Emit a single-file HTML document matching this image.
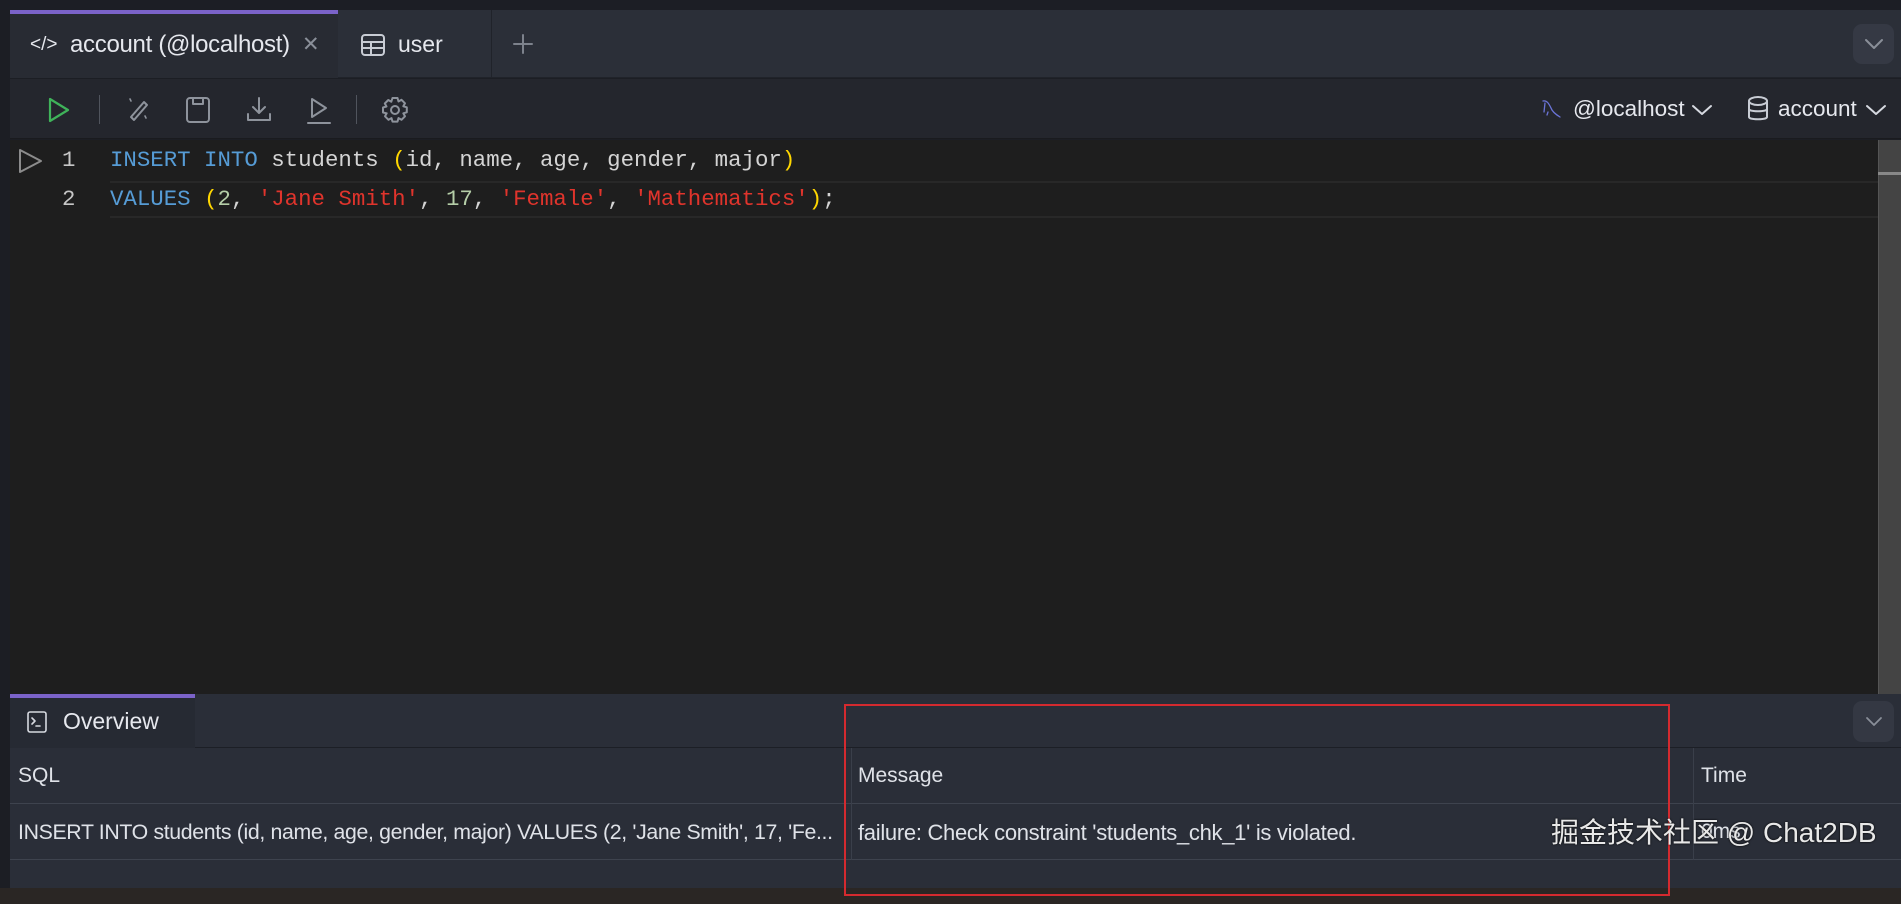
<!DOCTYPE html>
<html><head><meta charset="utf-8"><style>
*{margin:0;padding:0;box-sizing:border-box}
body{width:1901px;height:904px;overflow:hidden;background:#1c1e24;font-family:"Liberation Sans","Noto Sans CJK SC",sans-serif;position:relative;color:#d8dbe2}
.a{position:absolute}
.mono{font-family:"Liberation Mono",monospace;font-size:22.4px;white-space:pre}
svg{position:absolute;fill:none;stroke-linecap:round;stroke-linejoin:round}
</style></head><body>
<!-- tab bar -->
<div class="a" style="left:0;top:0;width:1901px;height:10px;background:#1c1e25"></div>
<div class="a" style="left:10px;top:10px;width:1891px;height:68px;background:#2b2f38;border-bottom:1px solid #20232a"></div>
<div class="a" style="left:10px;top:10px;width:328px;height:68px;background:#282b33"></div>
<div class="a" style="left:10px;top:10px;width:328px;height:4px;background:#7b63c9"></div>
<div class="a" style="left:338px;top:10px;width:154px;height:68px;border-right:1px solid #20232a"></div>
<div class="a" style="left:30px;top:34px;font-size:19px;color:#e6e8ee">&lt;/&gt;</div>
<div class="a" style="left:70px;top:31px;font-size:24px;color:#e6e8ee;letter-spacing:-0.3px">account (@localhost)</div>
<div class="a" style="left:302px;top:32px;font-size:21px;color:#8a8f99">✕</div>
<svg style="left:360px;top:33px" width="26" height="24" stroke="#c8ccd4" stroke-width="2"><rect x="2" y="2" width="22" height="20" rx="3"/><path d="M2 9H24M2 15H24M11 9V22"/></svg>
<div class="a" style="left:398px;top:31px;font-size:23px;color:#e6e8ee">user</div>
<svg style="left:512px;top:33px" width="22" height="22" stroke="#7d828c" stroke-width="2"><path d="M11 2V20M2 11H20"/></svg>
<div class="a" style="left:1853px;top:24px;width:41px;height:40px;border-radius:9px;background:#353944"></div>
<svg style="left:1863px;top:36px" width="22" height="16" stroke="#8a8f99" stroke-width="2"><path d="M3 4L11 12L19 4"/></svg>
<!-- toolbar -->
<div class="a" style="left:10px;top:79px;width:1891px;height:60px;background:#24262d;border-bottom:1px solid #1a1b1f"></div>
<svg style="left:46px;top:96px" width="26" height="28" stroke="#3fb35a" stroke-width="2.2"><path d="M4 3L22 14L4 25Z"/></svg>
<div class="a" style="left:99px;top:95px;width:1px;height:29px;background:#50545d"></div>
<svg style="left:125px;top:95px" width="30" height="30" stroke="#8e939c" stroke-width="2"><path d="M9 25L6 22L19 7L22 10Z"/><path d="M5 4L6 6M20 21L21 23" stroke-width="1.6"/></svg>
<svg style="left:185px;top:96px" width="26" height="28" stroke="#8e939c" stroke-width="2"><rect x="2" y="2" width="22" height="24" rx="3"/><path d="M8 2V8H18V2"/></svg>
<svg style="left:245px;top:95px" width="28" height="30" stroke="#8e939c" stroke-width="2"><path d="M14 3V18M8 12L14 18L20 12M3 19V25H25V19"/></svg>
<svg style="left:304px;top:95px" width="28" height="30" stroke="#8e939c" stroke-width="2"><path d="M8 4L22 13L8 22Z M4 28H26"/></svg>
<div class="a" style="left:356px;top:95px;width:1px;height:29px;background:#50545d"></div>
<svg style="left:380px;top:95px" width="30" height="30" stroke="#8e939c" stroke-width="2"><path d="M12.5 3h5l1 3.5 3-1.7 3.5 3.5-1.7 3 3.5 1v5l-3.5 1 1.7 3-3.5 3.5-3-1.7-1 3.5h-5l-1-3.5-3 1.7-3.5-3.5 1.7-3L3 17.5v-5l3.5-1-1.7-3 3.5-3.5 3 1.7z"/><circle cx="15" cy="15" r="4"/></svg>
<svg style="left:1540px;top:98px" width="22" height="22" stroke="#6b74d8" stroke-width="1.3"><path d="M3 3C7 2 9 6 11 10C12 13 15 16 20 19M5 5L4 14M8 14L7 17"/></svg>
<div class="a" style="left:1573px;top:96px;font-size:22.5px;color:#e6e8ee">@localhost</div>
<svg style="left:1690px;top:102px" width="24" height="16" stroke="#d6d9e0" stroke-width="2"><path d="M3 4L12 12L21 4"/></svg>
<svg style="left:1746px;top:95px" width="24" height="28" stroke="#c8ccd4" stroke-width="2"><ellipse cx="12" cy="6" rx="9" ry="4"/><path d="M3 6V22C3 25 21 25 21 22V6M3 14C3 17 21 17 21 14"/></svg>
<div class="a" style="left:1778px;top:96px;font-size:22.5px;color:#e6e8ee">account</div>
<svg style="left:1864px;top:102px" width="24" height="16" stroke="#d6d9e0" stroke-width="2"><path d="M3 4L12 12L21 4"/></svg>
<!-- editor -->
<div class="a" style="left:10px;top:140px;width:1868px;height:554px;background:#1e1e1e"></div>
<div class="a" style="left:110px;top:181px;width:1768px;height:37px;border-top:2px solid #282828;border-bottom:2px solid #282828"></div>
<div class="a" style="left:1878px;top:140px;width:23px;height:554px;background:#444;border-left:1px solid #555"></div>
<div class="a" style="left:1878px;top:172px;width:23px;height:3px;background:#888"></div>
<svg style="left:17px;top:147px" width="28" height="28" stroke="#8c8c8c" stroke-width="2"><path d="M3 3L24 14L3 25Z"/></svg>
<div class="a mono" style="left:62px;top:147px;color:#c6c6c6">1</div>
<div class="a mono" style="left:62px;top:186px;color:#c6c6c6">2</div>
<div class="a mono" style="left:110px;top:147px;color:#d4d4d4"><span style="color:#569cd6">INSERT INTO</span> students <span style="color:#ffd700">(</span>id, name, age, gender, major<span style="color:#ffd700">)</span></div>
<div class="a mono" style="left:110px;top:186px;color:#d4d4d4"><span style="color:#569cd6">VALUES</span> <span style="color:#ffd700">(</span><span style="color:#b5cea8">2</span>, <span style="color:#e0342c">'Jane Smith'</span>, <span style="color:#b5cea8">17</span>, <span style="color:#e0342c">'Female'</span>, <span style="color:#e0342c">'Mathematics'</span><span style="color:#ffd700">)</span>;</div>
<!-- bottom panel -->
<div class="a" style="left:10px;top:694px;width:1891px;height:194px;background:#2a2e38"></div>
<div class="a" style="left:0;top:888px;width:1901px;height:16px;background:#2a2624"></div>
<div class="a" style="left:10px;top:694px;width:185px;height:54px;background:#262a33"></div>
<div class="a" style="left:10px;top:694px;width:185px;height:4px;background:#7b63c9"></div>
<div class="a" style="left:195px;top:747px;width:1706px;height:1px;background:#1c1f26"></div>
<svg style="left:26px;top:710px" width="22" height="24" stroke="#d6d9e0" stroke-width="1.6"><rect x="2" y="2" width="18" height="20" rx="2"/><path d="M6 8L9 11L6 14M10 16H14"/></svg>
<div class="a" style="left:63px;top:708px;font-size:23px;color:#e6e8ee">Overview</div>
<div class="a" style="left:1853px;top:701px;width:41px;height:41px;border-radius:9px;background:#343843"></div>
<svg style="left:1864px;top:713px" width="20" height="18" stroke="#8a8f99" stroke-width="1.8"><path d="M3 5L10 12L17 5"/></svg>
<div class="a" style="left:10px;top:803px;width:1891px;height:1px;background:#3e434e"></div>
<div class="a" style="left:10px;top:859px;width:1891px;height:1px;background:#3e434e"></div>
<div class="a" style="left:851px;top:748px;width:1px;height:112px;background:#3a3f4a"></div>
<div class="a" style="left:1693px;top:748px;width:1px;height:112px;background:#3a3f4a"></div>
<div class="a" style="left:18px;top:764px;font-size:21px;color:#dfe2e8">SQL</div>
<div class="a" style="left:858px;top:764px;font-size:21px;color:#dfe2e8">Message</div>
<div class="a" style="left:1701px;top:764px;font-size:21px;color:#dfe2e8">Time</div>
<div class="a" style="left:18px;top:820px;font-size:21.3px;color:#dfe2e8;letter-spacing:-0.35px;white-space:nowrap">INSERT INTO students (id, name, age, gender, major) VALUES (2, 'Jane Smith', 17, 'Fe...</div>
<div class="a" style="left:858px;top:820px;font-size:22px;color:#dfe2e8;letter-spacing:-0.3px;white-space:nowrap">failure: Check constraint 'students_chk_1' is violated.</div>
<div class="a" style="left:1701px;top:820px;font-size:21px;color:#dfe2e8">0ms</div>
<div class="a" style="left:844px;top:704px;width:826px;height:192px;border:2px solid #d42a2f"></div>
<div class="a" style="left:1551px;top:811px;font-size:28px;color:#e8e8e8;white-space:nowrap;text-shadow:0 0 2px #000">掘金技术社区 @ Chat2DB</div>
</body></html>
